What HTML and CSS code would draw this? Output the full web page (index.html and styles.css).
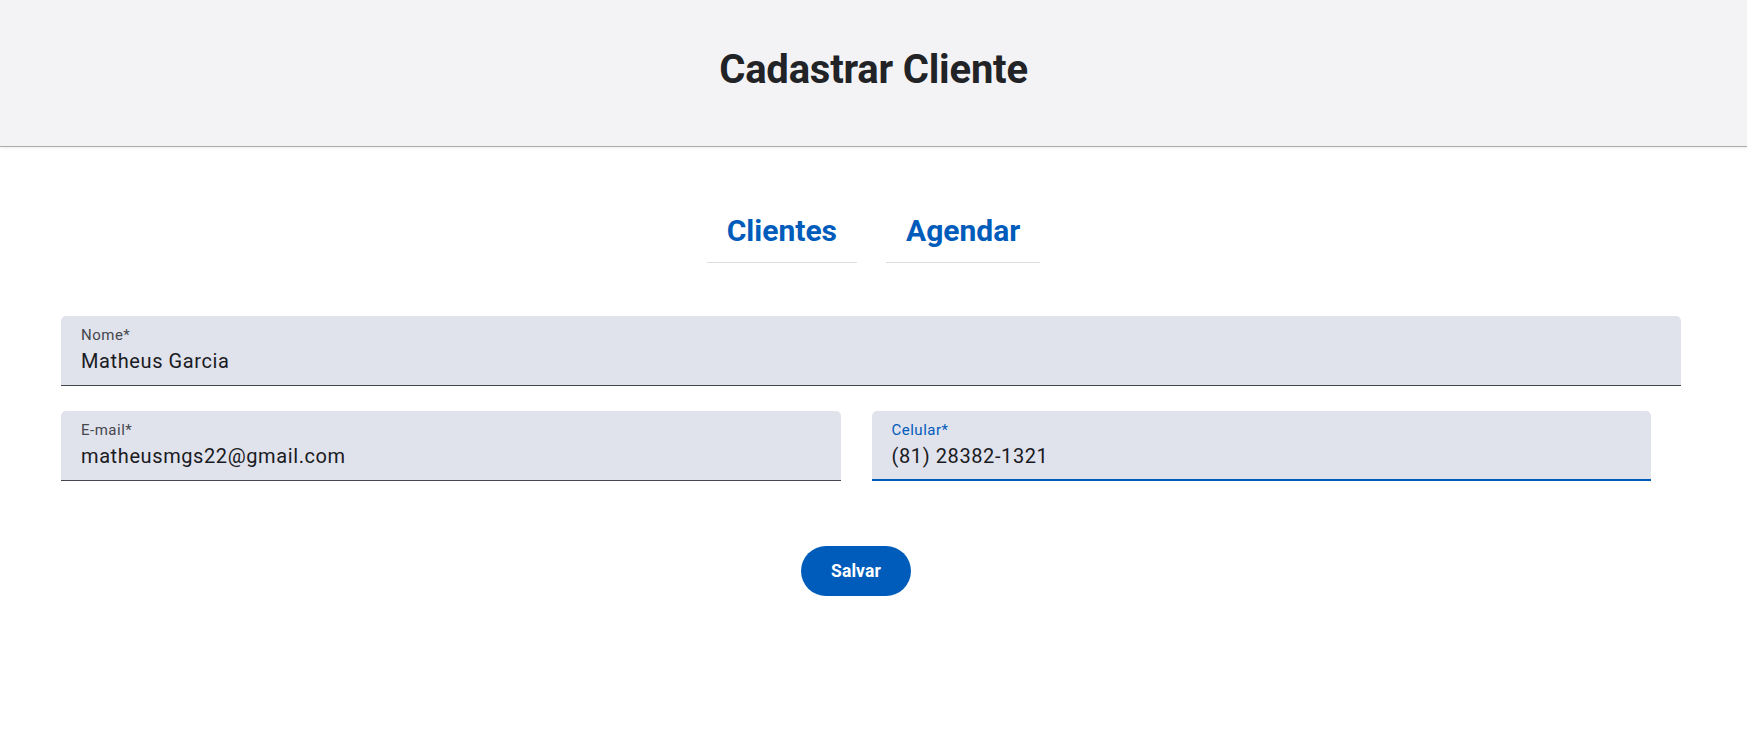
FILE: index.html
```html
<!DOCTYPE html>
<html lang="pt-BR">
<head>
<meta charset="utf-8">
<title>Cadastrar Cliente</title>
<link rel="stylesheet" href="styles.css">
</head>
<body>
<header class="topbar">
  <h1 class="title">Cadastrar Cliente</h1>
</header>
<nav class="tabs">
  <a class="tab" href="#">Clientes</a>
  <a class="tab" href="#">Agendar</a>
</nav>
<form class="form">
  <div class="field field-full">
    <span class="label">Nome*</span>
    <span class="value">Matheus Garcia</span>
  </div>
  <div class="row">
    <div class="field">
      <span class="label">E-mail*</span>
      <span class="value">matheusmgs22@gmail.com</span>
    </div>
    <div class="field focused">
      <span class="label">Celular*</span>
      <span class="value">(81) 28382-1321</span>
    </div>
  </div>
  <div class="actions">
    <button type="button" class="btn">Salvar</button>
  </div>
</form>
</body>
</html>
```

FILE: styles.css
```css
* { box-sizing: border-box; }
html, body { margin: 0; padding: 0; }
body {
  font-family: Roboto, "Noto Sans", "Liberation Sans", sans-serif;
  background: #ffffff;
  color: #1a1b1f;
  width: 1747px;
  height: 738px;
  overflow: hidden;
}
.topbar {
  height: 147px;
  background: #f3f3f5;
  border-bottom: 1px solid #acacac;
  box-shadow: 0 1px 3px rgba(0,0,0,0.08);
  padding-top: 46px;
  text-align: center;
}
.title {
  margin: 0;
  font-size: 40px;
  line-height: 47px;
  font-weight: 700;
  letter-spacing: -0.2px;
  color: #212326;
}
.tabs {
  display: flex;
  justify-content: center;
  gap: 29px;
  margin-top: 52px;
  padding-left: 0;
}
.tab {
  display: block;
  padding: 14px 20px 14px 20px;
  font-size: 30px;
  line-height: 35px;
  font-weight: 700;
  color: #005cbb;
  text-decoration: none;
  border-bottom: 1px solid #dcdcdc;
}
.form {
  margin: 53px 0 0 61px;
  width: 1620px;
  display: flex;
  flex-direction: column;
  align-items: flex-start;
}
.field {
  display: flex;
  flex-direction: column;
  height: 70px;
  background: #e0e2ec;
  border-radius: 5px 5px 0 0;
  border-bottom: 1px solid #44474e;
  padding: 9px 20px 0 20px;
  flex: 1 1 0;
}
.field-full {
  width: 1620px;
  flex: none;
}
.label {
  font-size: 15px;
  line-height: 20px;
  letter-spacing: 0.5px;
  color: #44474e;
}
.value {
  margin-top: 4px;
  font-size: 20px;
  line-height: 24px;
  letter-spacing: 0.6px;
  color: #1a1b1f;
}
.focused {
  border-bottom: 2px solid #005cbb;
}
.focused .label { color: #005cbb; }
.row {
  display: flex;
  gap: 31px;
  width: 1590px;
  margin-top: 25px;
}
.actions {
  width: 1590px;
  display: flex;
  justify-content: center;
  margin-top: 65px;
}
.btn {
  width: 110px;
  height: 50px;
  border: none;
  border-radius: 25px;
  background: #005cbb;
  color: #ffffff;
  font-family: Roboto, "Noto Sans", "Liberation Sans", sans-serif;
  font-size: 17.5px;
  font-weight: 700;
  letter-spacing: 0.1px;
  padding: 0;
  cursor: pointer;
}
```
